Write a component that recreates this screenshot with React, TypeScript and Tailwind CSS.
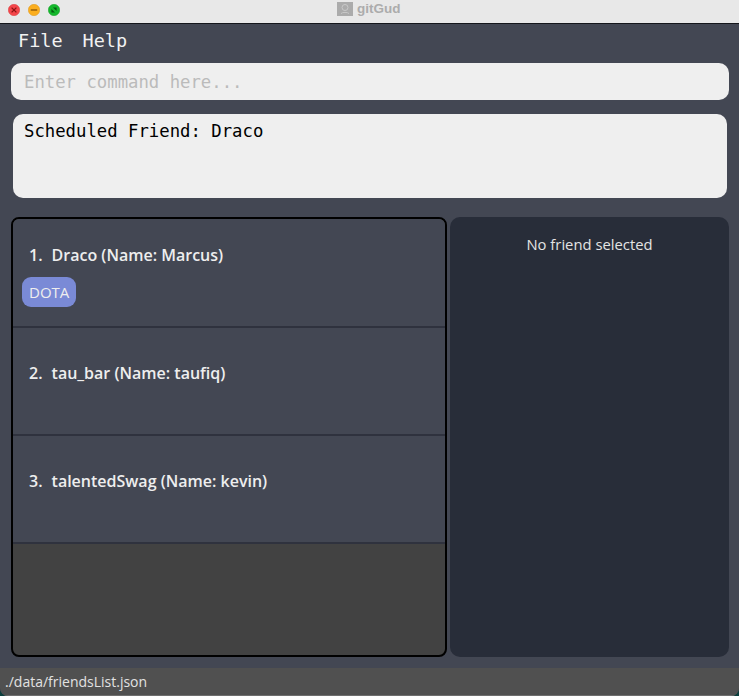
import React from 'react';

const friends = [
  { index: 1, name: 'Draco (Name: Marcus)', tags: ['DOTA'] },
  { index: 2, name: 'tau_bar (Name: taufiq)', tags: [] as string[] },
  { index: 3, name: 'talentedSwag (Name: kevin)', tags: [] as string[] },
];

const TrafficLights = () => (
  <div className="flex items-center gap-[8px] pb-[4px] pl-[8px]">
    <svg width="12" height="12" viewBox="0 0 12 12">
      <circle cx="6" cy="6" r="5.7" fill="#f4454a" stroke="#d93a3a" strokeWidth="0.5" />
      <path d="M3.6 3.6l4.8 4.8M8.4 3.6l-4.8 4.8" stroke="#8a1414" strokeWidth="1.3" />
    </svg>
    <svg width="12" height="12" viewBox="0 0 12 12">
      <circle cx="6" cy="6" r="5.7" fill="#fbae1e" stroke="#dc9618" strokeWidth="0.5" />
      <path d="M2.8 6h6.4" stroke="#985f0a" strokeWidth="1.5" />
    </svg>
    <svg width="12" height="12" viewBox="0 0 12 12">
      <circle cx="6" cy="6" r="5.7" fill="#14b82c" stroke="#10a024" strokeWidth="0.5" />
      <path d="M3.4 8.6V5l3.6 3.6zM8.6 3.4V7L5 3.4z" fill="#065c12" />
    </svg>
  </div>
);

const TitleBar = () => (
  <div className="relative flex h-[24px] items-center border-b border-[#15171c] bg-[#e8e8e8]">
    <TrafficLights />
    <div className="absolute left-[337px] top-[1px] flex items-center gap-[4px]">
      <svg width="16" height="14" viewBox="0 0 16 14">
        <rect width="16" height="14" fill="#ababab" />
        <circle cx="8" cy="5.500" r="3" fill="none" stroke="#c9c9c9" strokeWidth="1" />
        <path d="M4 11.500c1.500-1.500 6.500-1.500 8 0" fill="none" stroke="#c9c9c9" strokeWidth="1" />
      </svg>
      <span className="font-['Liberation_Sans',sans-serif] text-[13.500px] leading-[15px] font-bold text-[#acacac]">gitGud</span>
    </div>
  </div>
);

const FriendCard = ({ index, name, tags }: { index: number; name: string; tags: string[] }) => (
  <div
    className={
      tags.length > 0
        ? 'h-[109px] border-b-2 border-[#2f323e] bg-[#434753] pt-[25px] pl-[8px]'
        : 'h-[108px] border-b-2 border-[#2f323e] bg-[#434753] pt-[34px] pl-[8px]'
    }
  >
    <div className="pl-[8px] font-['Open_Sans',sans-serif] text-[16px] leading-[22px] font-semibold text-[#eeeeee]">
      <span>{index}.</span>
      <span className="ml-[9px]">{name}</span>
    </div>
    {tags.length > 0 && (
      <div className="mt-[11px] flex gap-2 pl-[1px]">
        {tags.map((tag) => (
          <span
            key={tag}
            className="rounded-[9px] bg-[#7a8ad6] px-[7px] py-[5px] font-['Open_Sans',sans-serif] text-[15px] leading-[20px] text-[#eeeeee]"
          >
            {tag}
          </span>
        ))}
      </div>
    )}
  </div>
);

export default function App() {
  return (
    <div className="h-[696px] w-[739px] bg-[#0c3f3d]">
      <div className="flex h-[696px] w-[739px] flex-col overflow-hidden rounded-b-[8px] bg-[#434753]">
        <TitleBar />

        {/* Menu */}
        <div className="flex h-[32px] shrink-0 items-center gap-[20px] pt-[1px] pl-[18px] font-['DejaVu_Sans_Mono',monospace] text-[18.500px] text-[#f2f2f2]">
          <span>File</span>
          <span>Help</span>
        </div>

        {/* Command box */}
        <div className="mt-[7px] mr-[10px] ml-[11px] flex h-[37px] shrink-0 items-center rounded-[10px] bg-[#efefef] pt-[3px] pl-[13px] font-['DejaVu_Sans_Mono',monospace] text-[17.300px] text-[#bbbbbb]">
          Enter command here...
        </div>

        {/* Result box */}
        <div className="mt-[14px] mr-[12px] ml-[13px] h-[84px] shrink-0 rounded-[10px] bg-[#efefef] pt-[5px] pl-[11px] font-['DejaVu_Sans_Mono',monospace] text-[17.300px] leading-[24px] text-black">
          Scheduled Friend: Draco
        </div>

        <div className="mx-[10px] mt-[19px] flex h-[440px] shrink-0 gap-[3px] pl-[1px]">
          {/* Friend list */}
          <div className="flex w-[436px] flex-col overflow-hidden rounded-[8px] border-2 border-black bg-[#424242]">
            {friends.map((friend) => (
              <FriendCard key={friend.index} {...friend} />
            ))}
          </div>

          {/* Friend detail */}
          <div className="w-[279px] rounded-[10px] bg-[#282d39] pt-[17px] text-center font-['Open_Sans',sans-serif] text-[14.800px] leading-[20px] text-[#e4e4e4]">
            No friend selected
          </div>
        </div>

        {/* Status bar */}
        <div className="mt-[11px] flex h-[28px] shrink-0 items-center border-b border-[#6e6e6e] bg-[#505050] pl-[5px] font-['Open_Sans',sans-serif] text-[14px] text-[#e2e2e2]">
          ./data/friendsList.json
        </div>
      </div>
    </div>
  );
}
